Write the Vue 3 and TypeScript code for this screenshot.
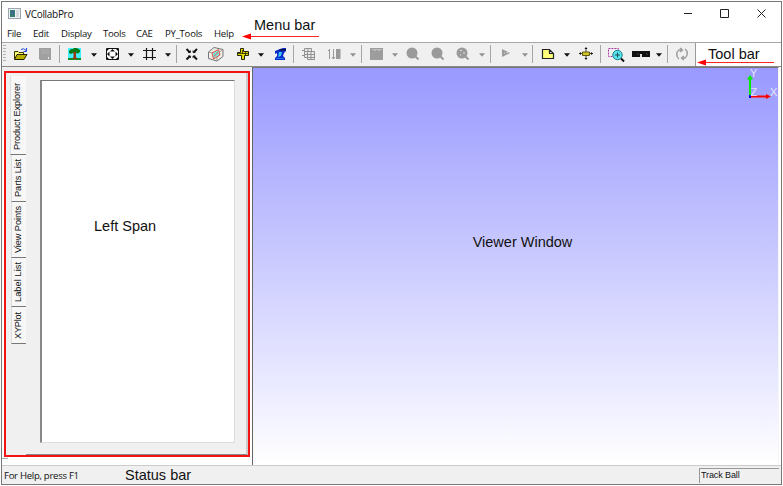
<script setup lang="ts">
interface Tool { kind: string; gap: number }

const menus = [
  { label: 'File', width: 26 },
  { label: 'Edit', width: 28 },
  { label: 'Display', width: 42 },
  { label: 'Tools', width: 33 },
  { label: 'CAE', width: 29 },
  { label: 'PY_Tools', width: 49 },
  { label: 'Help', width: 24 },
]

const t = (kind: string, gap: number): Tool => ({ kind, gap })
const tools: Tool[] = [
  t('open', 6), t('save', 6), t('sep', 5), t('tree', 5), t('arrow', 8), t('fit', 7), t('arrow', 6),
  t('hash', 6), t('arrow', 7), t('sep', 5), t('cross', 6), t('cube', 6), t('caliper', 9), t('arrow', 6),
  t('scope', 7), t('sep', 4), t('table', 6), t('filter', 7), t('arrow-off', 7), t('sep', 5),
  t('film', 6), t('arrow-off', 6), t('lens', 6), t('lens', 7), t('lens-dot', 7), t('arrow-off', 7), t('sep', 5),
  t('play', 6), t('arrow-off', 7), t('sep', 4), t('note', 6), t('arrow', 7), t('move', 7), t('sep', 5),
  t('zoomwin', 6), t('glasses', 6), t('arrow', 5), t('sep', 5), t('refresh', 5),
]

const tabs = [
  { label: 'Product Explorer', height: 79, length: 67 },
  { label: 'Parts List', height: 47, length: 38 },
  { label: 'View Points', height: 56, length: 47 },
  { label: 'Label List', height: 49, length: 40 },
  { label: 'XYPlot', height: 37, length: 27 },
]
</script>

<template>
  <div class="window">
    <header class="title-bar">
      <svg class="app-icon" width="13" height="11" viewBox="0 0 13 11">
        <rect x=".5" y=".5" width="12" height="10" fill="#eef2f5" stroke="#9aa5ac" />
        <rect x="2" y="2" width="5" height="7" fill="#347b70" />
        <rect x="3" y="3" width="3" height="3" fill="#3e6b95" />
        <rect x="8" y="2" width="3" height="7" fill="#d6dade" />
      </svg>
      <span class="title">VCollabPro</span>
      <svg class="controls" width="84" height="12" viewBox="0 0 84 12" fill="none" stroke="#222">
        <path d="M1 6.500H9M37.500 2.500H45.500V10.500H37.500ZM74.500 2.500L82.500 10.500M82.500 2.500L74.500 10.500" />
      </svg>
    </header>

    <nav class="menu-bar">
      <span v-for="m in menus" :key="m.label" class="menu" :style="{ width: m.width + 'px' }">{{ m.label }}</span>
    </nav>

    <div class="tool-row">
      <div class="toolbar">
        <i class="grip"></i>
        <span v-for="(tool, i) in tools" :key="i" class="tool" :class="tool.kind" :style="{ marginLeft: tool.gap + 'px' }">
          <svg v-if="tool.kind.startsWith('arrow')" width="6" height="4" viewBox="0 0 6 4"><path d="M0 .3H6L3 3.800Z" fill="currentColor" /></svg>
          <svg v-else-if="tool.kind !== 'sep'" :width="tool.kind === 'glasses' ? 20 : 18" height="18" :viewBox="tool.kind === 'glasses' ? '0 0 20 18' : '0 0 18 18'">
            <g v-if="tool.kind === 'open'">
              <path d="M2.500 14V6.500H6L7 7.500H11.500V9.500" fill="#ffff70" stroke="#333300" />
              <path d="M2.500 14.500L5 9.500H15L12 14.500Z" fill="#b9b000" stroke="#222200" />
              <path d="M9 4.500Q12 2.500 14 5.500M14.500 3V6.500H11.500" fill="none" stroke="#2449d8" />
            </g>
            <g v-else-if="tool.kind === 'save'">
              <path d="M3 3H15V15H4L3 14Z" fill="#a0a0a0" />
              <path d="M5 4H13V9H5Z" fill="#a8a8a8" /><path d="M12 12H13V14H12Z" fill="#eee" />
            </g>
            <g v-else-if="tool.kind === 'tree'">
              <path d="M3 3H16V15H3Z" fill="#42efff" />
              <path d="M3 13H16V15H3Z" fill="#168b22" />
              <path d="M6 4H8L9 3H12L15 5V7L13 8.500L11 8H8L6 9L4 8V6Z" fill="#087d15" />
              <path d="M8.500 7H11V12L12.500 14H7.500L8.500 12Z" fill="#9b3411" />
            </g>
            <g v-else-if="tool.kind === 'fit'">
              <path d="M2.500 3.500H14.500V14.500H2.500Z" fill="#fff" stroke="#111" />
              <path d="M8.500 4L11 6.500H6ZM8.500 14L6 11.500H11ZM3 9L5.500 6.500V11.500ZM14 9L11.500 6.500V11.500Z" fill="#111" />
              <path d="M3 4H5L3 6ZM14 4V6L12 4ZM3 14V12L5 14ZM14 14H12L14 12Z" fill="#111" />
            </g>
            <path v-else-if="tool.kind === 'hash'" d="M6.500 3V15M12.500 3V15M3 5.500H16M3 12.500H16" fill="none" stroke="#151515" stroke-width="1.200" />
            <g v-else-if="tool.kind === 'cross'" fill="none" stroke="#111">
              <path d="M3.500 4L7 7.500M14 4L10.500 7.500M3.500 14.500L7 11M14 14.500L10.500 11" stroke-width="1.900" />
              <path d="M5 7.500H7.500V5.500M12.500 7.500H10V5.500M5 11H7.500V13M12.500 11H10V13" stroke-width=".8" />
            </g>
            <g v-else-if="tool.kind === 'cube'">
              <path d="M1.500 7L7 2.500L16 4.500V11.500L10 16L1.500 13.500Z" fill="#efede7" stroke="#777" />
              <path d="M1.500 7L10 9V16M10 9L16 4.500" fill="none" stroke="#88837c" stroke-width=".7" />
              <path d="M5 8L11.500 4.500L13 10L6.500 14Z" fill="#7ae5df" stroke="#f05040" />
              <path d="M7 11.500L11 7" stroke="#f05040" />
            </g>
            <g v-else-if="tool.kind === 'caliper'" fill="#e2db00" stroke="#252500">
              <path d="M6.500 3.500H9.500V6.500H14.500V10.500H10.500V14.500H7.500V10.500H3.500V7.500H6.500Z" />
              <path d="M3 8.500H15M8.500 5V9M11.500 7V10" fill="none" stroke-width=".8" />
            </g>
            <g v-else-if="tool.kind === 'scope'">
              <path d="M4 6L9 4L12 3H15V6L13 8L12 11L14 13V15H4V13L6 11V8L4 9Z" fill="#0828c9" />
              <path d="M8 7H11L10 11L7 12Z" fill="#35c9ed" /><path d="M9 4H15V5.500H8Z" fill="#081040" /><path d="M5 13H13V14H5Z" fill="#1779ee" />
            </g>
            <g v-else-if="tool.kind === 'table'" fill="#e9e9e9" stroke="#929292">
              <path d="M4.500 3.500H11.500V12.500H4.500Z" /><path d="M7.500 6.500H14.500V14.500H7.500ZM4 6.500H12M4 9.500H15M8 12.500H15M8 3V6M11 6V15M2 5.500H5M2 10.500H5" />
            </g>
            <g v-else-if="tool.kind === 'filter'" fill="none" stroke="#999">
              <path d="M4.500 4V14M8.500 4V14M3 6L4.500 4.500M7 12L8.500 14L10 12" /><path d="M11 4H15.500V14H11Z" fill="#999" stroke="none" />
            </g>
            <g v-else-if="tool.kind === 'film'">
              <path d="M2 3H15V15H2Z" fill="#9d9d9d" /><path d="M5 4V5M7 4V6M9 4V5M11 4V6M13 4V5" stroke="#ddd" />
            </g>
            <g v-else-if="tool.kind.startsWith('lens')">
              <circle cx="8" cy="8" r="5.500" fill="#9a9a9a" /><path d="M11.500 11.500L14.500 14.500" stroke="#9a9a9a" stroke-width="2" />
              <path v-if="tool.kind === 'lens-dot'" d="M6 5.500H8M10 7V9M6 10H7" fill="none" stroke="#e1e1e1" />
            </g>
            <g v-else-if="tool.kind === 'play'"><path d="M5 4L13 8L5 12Z" fill="#9a9a9a" /><path d="M7 8H8M9.500 7.500H11" stroke="#ddd" /></g>
            <path v-else-if="tool.kind === 'note'" d="M3.500 4.500H10.500L14.500 8.500V13.500H3.500ZM10.500 4.500V8.500H14.500" fill="#ffff79" stroke="#222" stroke-width="1.200" />
            <g v-else-if="tool.kind === 'move'">
              <path d="M2 8.500H16M9 3V14" stroke="#444" /><path d="M9 2L10.500 4H7.500ZM9 15L7.500 13H10.500ZM2 8.500L4 7V10ZM16 8.500L14 7V10Z" fill="#111" /><path d="M5.500 7H12.500V10.500H5.500Z" fill="#d2c729" stroke="#5d5611" />
            </g>
            <g v-else-if="tool.kind === 'zoomwin'">
              <path d="M1.500 3.500H11.500V11.500H1.500Z" fill="none" stroke="#aa38aa" stroke-dasharray="2 1" />
              <circle cx="10.500" cy="10" r="4.700" fill="#58e5ef" stroke="#197b86" /><path d="M8 10H13M10.500 7.500V12.500" stroke="#214c55" /><path d="M14 13.500L17 16.500" stroke="#111" stroke-width="2" />
            </g>
            <g v-else-if="tool.kind === 'glasses'">
              <path d="M1 6H19V12H1Z" fill="#111" /><path d="M9 9H11V12H9Z" fill="#ddd" /><path d="M6 8L8 10M15 8L17 10" stroke="#444" />
            </g>
            <g v-else fill="none" stroke="#9a9a9a" stroke-width="1.400">
              <path d="M6 14C3 12 3 7 6 5H9M12 4C15 6 15 11 12 13H9" /><path d="M7 3L9.500 5L7 7M11 11L8.500 13L11 15" />
            </g>
          </svg>
        </span>
      </div>
      <div class="toolbar-rest"></div>
    </div>

    <main class="workspace">
      <aside class="left-span">
        <section class="left-frame">
          <div class="tabs">
            <div v-for="(tab, i) in tabs" :key="tab.label" class="tab" :class="{ active: i === 0 }" :style="{ height: tab.height + 'px' }">
              <svg width="14" :height="tab.height" :viewBox="`0 0 14 ${tab.height}`">
                <text :transform="`translate(10 ${tab.height - 5}) rotate(-90)`" :textLength="tab.length">{{ tab.label }}</text>
              </svg>
            </div>
          </div>
          <div class="tab-body"><div class="explorer"><span class="caption">Left Span</span></div></div>
        </section>
        <i class="stub"></i>
      </aside>
      <section class="viewer">
        <span class="caption">Viewer Window</span>
        <svg class="axes" width="32" height="34" viewBox="0 0 32 34">
          <path d="M4 28V9" stroke="#00ed00" stroke-width="2" /><path d="M4 7L7 11.500H1Z" fill="#00ed00" />
          <path d="M4 28.500H21" stroke="#f00" stroke-width="2" /><path d="M25 28.500L20 26V31Z" fill="#f00" />
          <path d="M3 27H5V30H3Z" fill="#0000d5" />
          <g fill="#e4e4ff"><text x="4" y="9">Y</text><text x="4.500" y="28">Z</text><text x="24" y="28">X</text></g>
        </svg>
      </section>
    </main>

    <footer class="status-bar">
      <span class="help">For Help, press F1</span><span class="caption">Status bar</span><span class="mode">Track Ball</span>
    </footer>

    <div class="callout menu-callout"><span class="caption">Menu bar</span>
      <svg width="77" height="8" viewBox="0 0 77 8"><path d="M7 4.500H77" stroke="#f22" /><path d="M0 4.500L9 1.500V7.500Z" fill="#f00" /></svg>
    </div>
    <div class="callout tool-callout"><span class="caption">Tool bar</span>
      <svg width="77" height="8" viewBox="0 0 77 8"><path d="M7 4.500H77" stroke="#f22" /><path d="M0 4.500L9 1.500V7.500Z" fill="#f00" /></svg>
    </div>
  </div>
</template>

<style>
body { background: #fff; overflow: hidden; }
</style>

<style scoped>
* { box-sizing: border-box; }
svg { display: block; flex: none; }
.window { position: relative; display: flex; flex-direction: column; width: 781px; height: 484px; margin: 1px 0 0 1px; border: 1px solid #777; background: #fff; color: #111; font-family: "Open Sans", "Noto Sans", sans-serif; font-size: 9.600px; }
.title-bar { display: flex; align-items: center; height: 23px; padding: 0 13px 0 6px; }
.app-icon { margin-top: 1px; }
.title { margin-left: 4px; font-size: 10px; line-height: 12px; margin-top: 1px; letter-spacing: -.3px; }
.controls { margin-left: auto; margin-right: 1px; }
.menu-bar { display: flex; height: 17px; padding-left: 5px; align-items: center; line-height: 17px; }
.menu { flex: none; white-space: nowrap; letter-spacing: -.25px; padding-top: 1px; }
.tool-row { display: flex; height: 24px; background: #f0f0f0; border-top: 1px solid #a8a8a8; }
.toolbar { display: flex; width: 694px; align-items: center; border-right: 1px solid #9a9a9a; }
.toolbar-rest { flex: 1; background: #fff; }
.grip { width: 3px; height: 18px; margin-left: 1px; flex: none; background: repeating-linear-gradient(#b2b2b2 0 1px, #f0f0f0 1px 3px); }
.tool { flex: none; color: #111; }
.sep { width: 1px; height: 18px; background: #a5a5a5; }
.arrow, .arrow-off { padding-top: 2px; }
.arrow-off { color: #929292; }
.workspace { display: flex; height: 400px; border-top: 1px solid #888; }
.left-span { flex: none; width: 250px; padding: 4px 2px 0 2px; background: linear-gradient(#ededed 0 4px, #fff 4px); }
.left-frame { display: flex; width: 246px; height: 386px; border: 2px solid #f51212; background: #f0f0f0; }
.tabs { flex: none; width: 20px; padding: 3px 0 0 5px; }
.tab { width: 15px; border-bottom: 1px solid #777; background: #f7f7f7; border-left: 1px solid #ddd; }
.tab.active { width: 16px; margin-left: -1px; }
.tab svg { margin-left: -1px; }
.tab text { font: 9.200px "Liberation Sans", Arial, sans-serif; fill: #111; }
.tab-body { flex: 1; padding: 7px 11px 11px 14px; border-right: 2px solid #ccc; border-bottom: 1px solid #888; }
.explorer { height: 363px; width: 195px; background: #fff; border: 1px solid #ddd; border-top: 1px solid #777; border-left: 2px solid #888; padding: 136px 0 0 52px; }
.caption { color: #111; font: 14.500px/18px "Liberation Sans", Arial, sans-serif; white-space: nowrap; }
.stub { display: block; width: 6px; height: 2px; margin-left: -2px; border-bottom: 1px solid #aaa; }
.viewer { position: relative; flex: none; width: 527px; border-left: 1px solid #666; border-top: 1px solid #777; border-right: 1px solid #f5f5f5; background: linear-gradient(#9999ff, #fff); display: flex; justify-content: center; padding: 165px 0 0 14px; }
.axes { position: absolute; top: 0; right: 0; }
.axes text { font: 11px "Liberation Sans", Arial, sans-serif; }
.status-bar { display: flex; flex: 1; align-items: center; background: #f0f0f0; border-top: 1px solid #ccc; }
.help { width: 123px; padding: 1px 0 0 2px; letter-spacing: -.3px; white-space: nowrap; }
.mode { width: 80px; height: 15px; margin: 0 2px 0 auto; border-top: 1px solid #999; border-left: 1px solid #999; font: 9px/12px "Liberation Sans", Arial, sans-serif; letter-spacing: -.1px; padding-left: 1px; }
.callout { position: absolute; }
.callout .caption { display: block; }
.callout svg { margin-top: -2px; }
.menu-callout { left: 240px; top: 14px; }
.menu-callout .caption { padding-left: 12px; }
.tool-callout { left: 695px; top: 43px; }
.tool-callout .caption { padding-left: 11px; }
.tool-callout svg { margin-top: -5px; }
</style>
